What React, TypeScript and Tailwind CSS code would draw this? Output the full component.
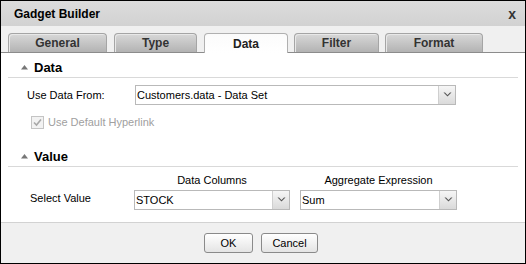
const font = "font-['Liberation_Sans',Arial,sans-serif]";

function Arrow() {
  return (
    <svg width="9" height="6" viewBox="0 0 9 6" className="block">
      <path d="M0.5 0.5 L4.5 4.5 L8.5 0.5 L7 0.5 L4.5 3 L2 0.5 Z" fill="#555" />
    </svg>
  );
}

function Select({ value, width }: { value: string; width: string }) {
  return (
    <div className={`flex h-[20px] ${width} items-stretch border border-[#b9b9b9] bg-white`}>
      <div className="flex flex-1 items-center pl-[1px] text-[11px] text-black">{value}</div>
      <div className="flex w-[17px] items-center justify-center border-l border-[#cfcfcf] bg-gradient-to-b from-[#f6f6f6] to-[#dadada]">
        <Arrow />
      </div>
    </div>
  );
}

function Section({ title }: { title: string }) {
  return (
    <div className="mx-[7px] flex h-[20px] items-center border-b border-[#d9d9d9] pl-[13px]">
      <svg width="7" height="5" viewBox="0 0 7 5" className="mr-[6px]">
        <path d="M3.5 0 L7 4.5 L0 4.5 Z" fill="#777" />
      </svg>
      <span className="text-[13px] font-bold leading-none text-black">{title}</span>
    </div>
  );
}

const tabs = [
  { label: "General", w: "w-[99px]", ml: "ml-[7px]" },
  { label: "Type", w: "w-[83px]", ml: "ml-[7px]" },
  { label: "Data", w: "w-[84px]", ml: "ml-[7px]", active: true },
  { label: "Filter", w: "w-[85px]", ml: "ml-[6px]" },
  { label: "Format", w: "w-[98px]", ml: "ml-[6px]" },
];

export default function App() {
  return (
    <div className={`${font} flex h-[264px] w-[526px] flex-col border border-black bg-white`}>
      {/* Title bar */}
      <div className="flex h-[25px] items-center justify-between bg-gradient-to-b from-[#dcdcdc] to-[#d2d2d2] pl-[13px] pr-[9px]">
        <span className="text-[12px] font-bold text-black">Gadget Builder</span>
        <span className="text-[14px] font-bold leading-none text-[#333]">x</span>
      </div>

      {/* Tab strip */}
      <div className="flex h-[27px] items-end border-b border-[#8c8c8c] bg-[#f0f0f0]">
        {tabs.map((t) =>
          t.active ? (
            <div
              key={t.label}
              className={`${t.ml} ${t.w} -mb-px flex h-[20px] items-center justify-center rounded-t-[4px] border border-b-0 border-[#b0b0b0] bg-gradient-to-b from-[#fbfbfb] to-white text-[12px] font-bold text-[#222]`}
            >
              {t.label}
            </div>
          ) : (
            <div
              key={t.label}
              className={`${t.ml} ${t.w} flex h-[19px] items-center justify-center rounded-t-[4px] border border-b-0 border-[#a5a5a5] bg-gradient-to-b from-[#d8d8d8] to-[#b3b3b3] text-[12px] font-bold text-[#333] shadow-[inset_1px_1px_0_#e8e8e8]`}
            >
              {t.label}
            </div>
          )
        )}
      </div>

      {/* Body */}
      <div className="flex flex-1 flex-col pt-[5px]">
        <Section title="Data" />
        <div className="mt-[7px] flex items-center pl-[26px]">
          <span className="w-[108px] text-[11px] text-black">Use Data From:</span>
          <Select value="Customers.data - Data Set" width="w-[321px]" />
        </div>
        <div className="mt-[11px] flex h-[13px] items-center pl-[30px]">
          <span className="flex h-[13px] w-[13px] items-center justify-center border border-[#c4c4c4] bg-[#f2f2f2]">
            <svg width="9" height="9" viewBox="0 0 9 9">
              <path d="M1 4.5 L3.5 7 L8 1.5" stroke="#a8a8a8" strokeWidth="1.6" fill="none" />
            </svg>
          </span>
          <span className="ml-[4px] text-[11px] leading-[13px] text-[#a0a0a0]">Use Default Hyperlink</span>
        </div>

        <div className="mt-[18px]">
          <Section title="Value" />
        </div>
        <div className="mt-[7px] flex items-end pl-[29px]">
          <span className="mb-[4px] w-[104px] text-[11px] text-black">Select Value</span>
          <div className="flex flex-col items-center">
            <span className="mb-[3px] text-[11px] leading-[13px] text-black">Data Columns</span>
            <Select value="STOCK" width="w-[156px]" />
          </div>
          <div className="ml-[10px] flex flex-col items-center">
            <span className="mb-[3px] text-[11px] leading-[13px] text-black">Aggregate Expression</span>
            <Select value="Sum" width="w-[157px]" />
          </div>
        </div>
      </div>

      {/* Footer */}
      <div className="flex h-[41px] items-center justify-center gap-[8px] border-t border-[#d2d2d2] bg-[#f0f0f0] pr-[4px]">
        <button className="h-[20px] w-[49px] rounded-[3px] border border-[#8a8a8a] bg-gradient-to-b from-white to-[#e4e4e4] text-[11px] text-black">
          OK
        </button>
        <button className="h-[20px] w-[57px] rounded-[3px] border border-[#8a8a8a] bg-gradient-to-b from-white to-[#e4e4e4] text-[11px] text-black">
          Cancel
        </button>
      </div>
    </div>
  );
}
